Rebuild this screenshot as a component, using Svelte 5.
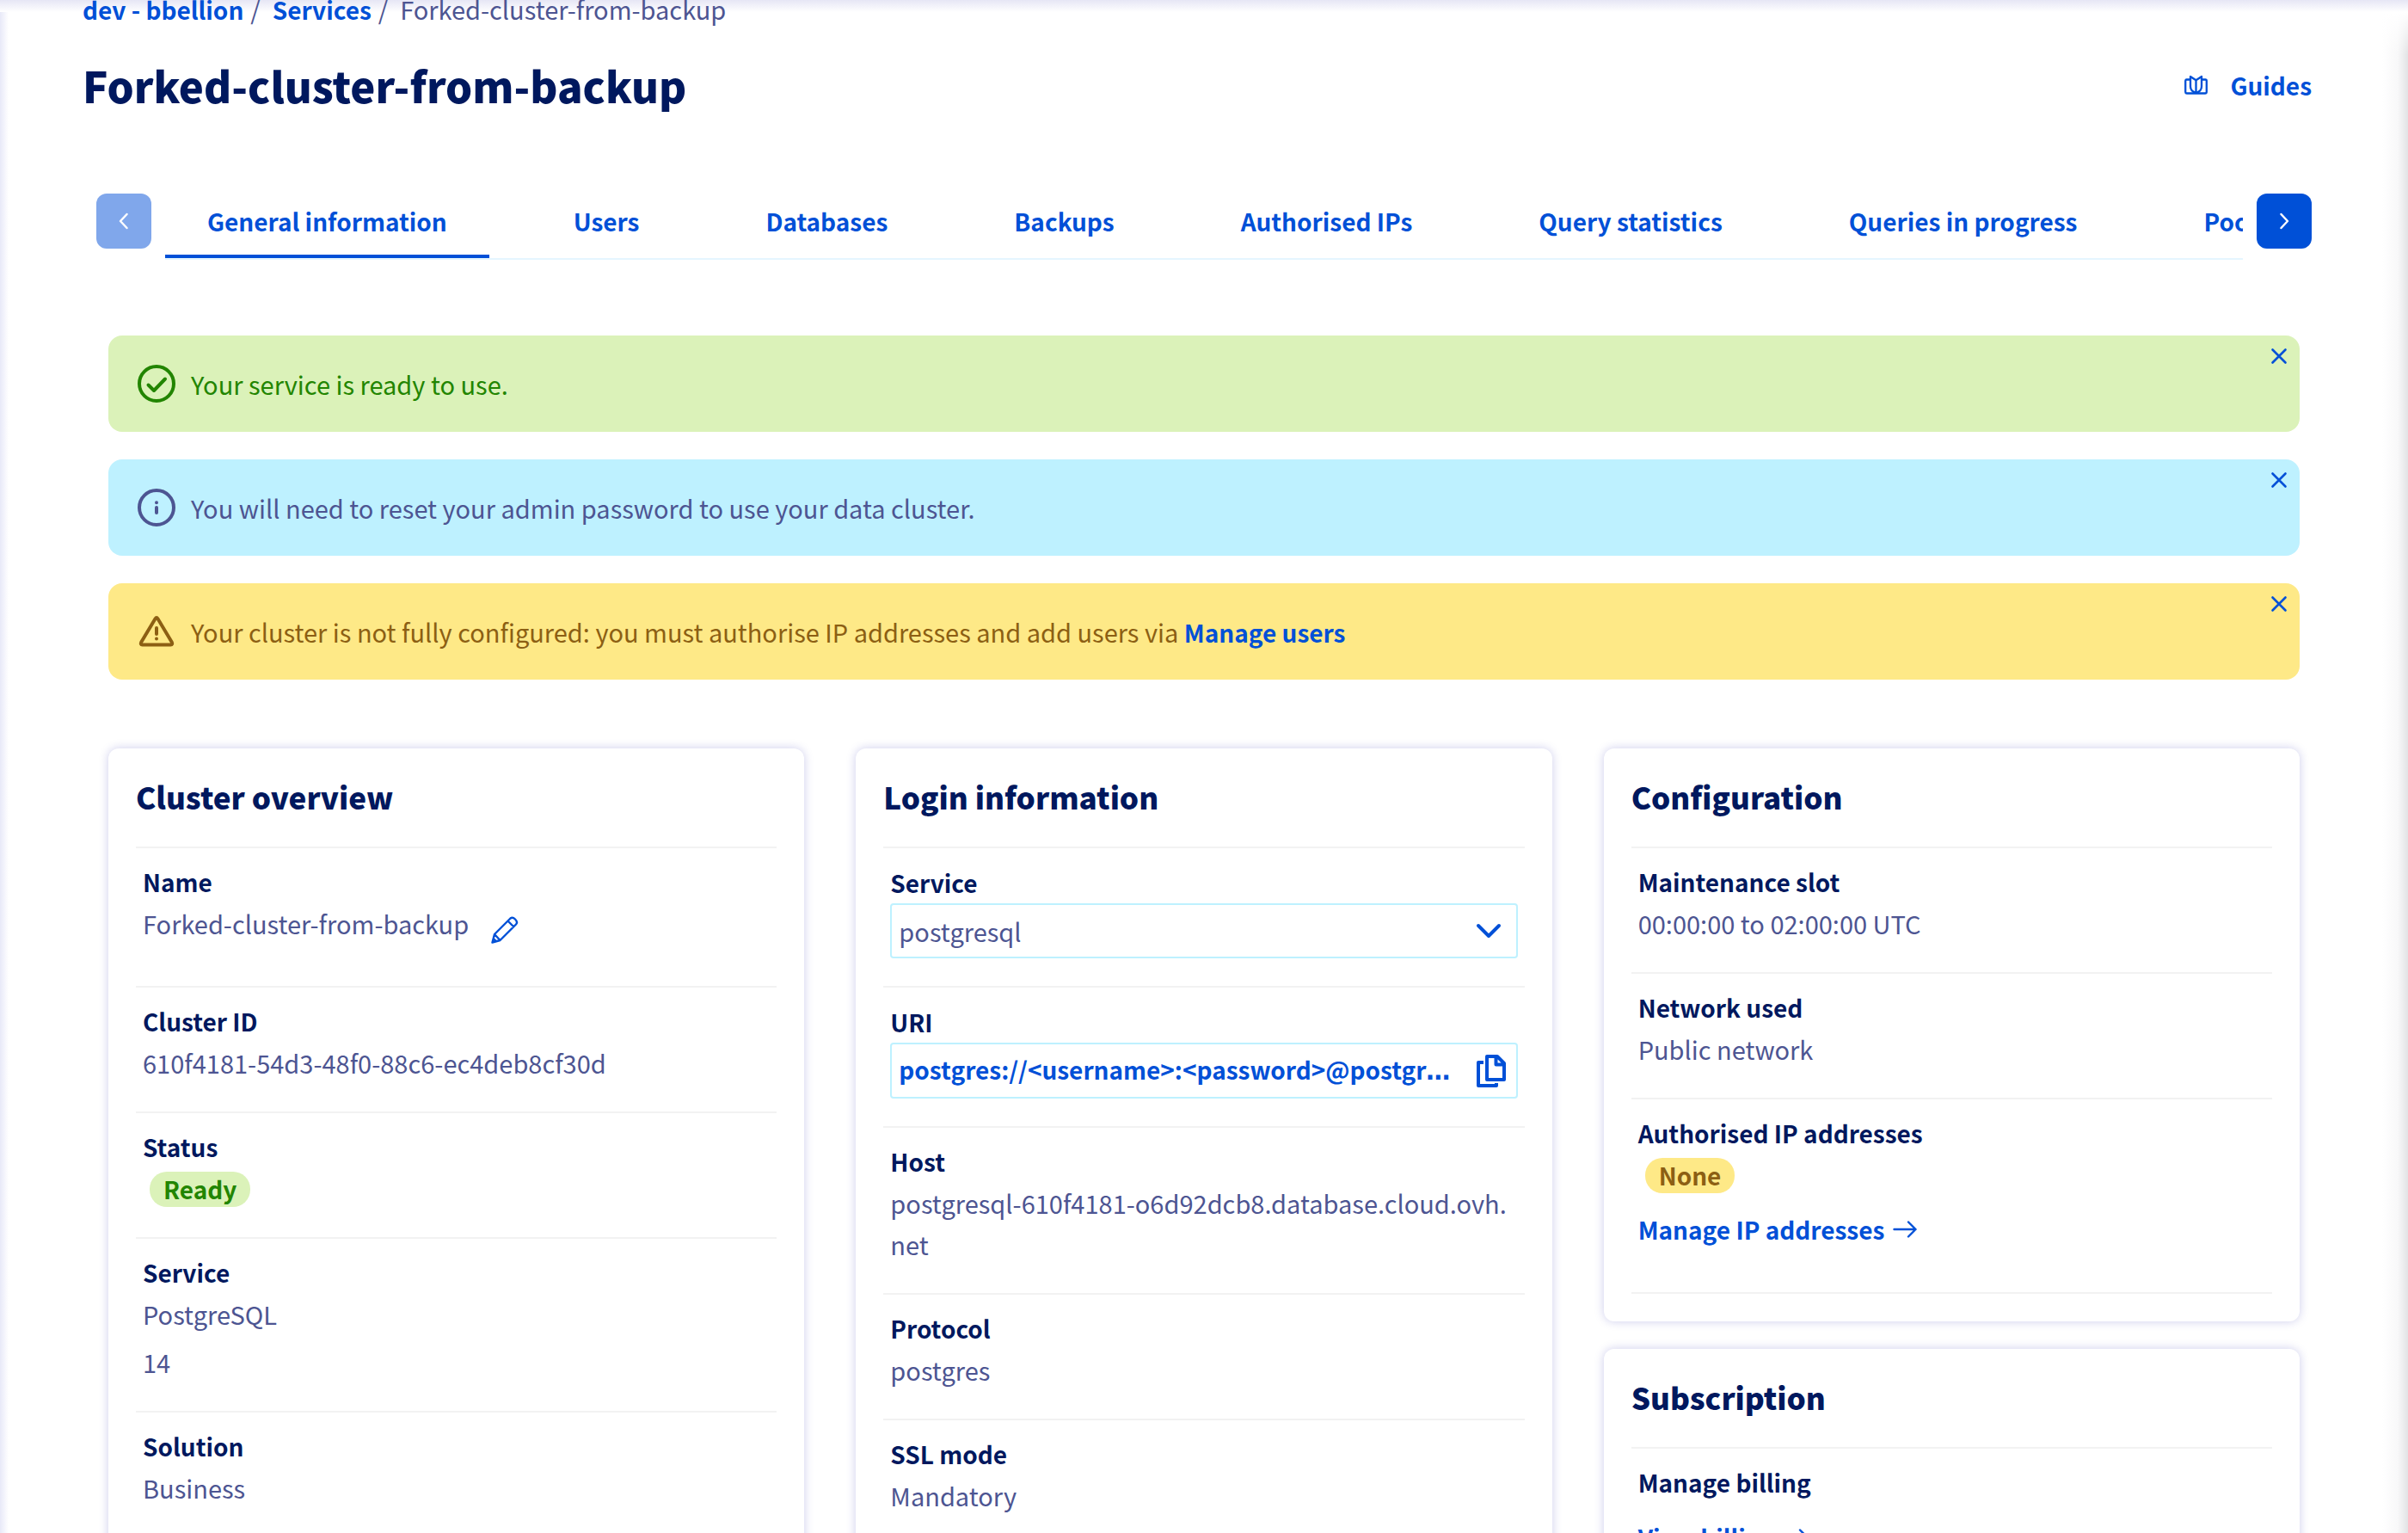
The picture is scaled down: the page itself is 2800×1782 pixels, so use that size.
<script>
  const tabs = [
    'General information',
    'Users',
    'Databases',
    'Backups',
    'Authorised IPs',
    'Query statistics',
    'Queries in progress',
    'Pools',
  ];
  let active = $state('General information');
  let service = $state('postgresql');
</script>

{#snippet close()}
  <button class="close" aria-label="Close">
    <svg width="20" height="20" viewBox="0 0 20 20" fill="none" stroke="currentColor" stroke-width="2.6" stroke-linecap="round">
      <path d="M2.5 2.5 17.5 17.5M17.5 2.5 2.5 17.5" />
    </svg>
  </button>
{/snippet}

{#snippet arrow()}
  <svg class="arrow" width="28" height="22" viewBox="0 0 28 22" fill="none" stroke="currentColor" stroke-width="2.4" stroke-linecap="round" stroke-linejoin="round">
    <path d="M1.5 11H26.5M18 2.5 26.5 11 18 19.5" />
  </svg>
{/snippet}

<div class="page">
  <nav class="breadcrumb" aria-label="Breadcrumb">
    <a href="#project">dev - bbellion</a><span class="sep">/</span>
    <a href="#services">Services</a><span class="sep">/</span>
    <span>Forked-cluster-from-backup</span>
  </nav>

  <header class="title-row">
    <h1>Forked-cluster-from-backup</h1>
    <a class="guides" href="#guides">
      <svg width="27" height="24" viewBox="0 0 27 24" fill="none" stroke="currentColor" stroke-width="2.3" stroke-linejoin="round">
        <path d="M7 5.500H2.600Q1.200 5.500 1.200 7V19.700Q1.200 21.500 3 21.500H24Q25.800 21.500 25.800 19.700V7Q25.800 5.500 24.400 5.500H20" />
        <path d="M13.500 6.200 7 2V13.500Q7 19 13.500 21 20 19 20 13.500V2L13.500 6.200V21" />
      </svg>
      Guides
    </a>
  </header>

  <div class="tab-bar">
    <button class="scroll" disabled aria-label="Previous tabs">
      <svg width="12" height="20" viewBox="0 0 12 20" fill="none" stroke="currentColor" stroke-width="2.4" stroke-linecap="round" stroke-linejoin="round"><path d="M9.500 2 2 10 9.500 18" /></svg>
    </button>
    <div class="tabs" role="tablist">
      {#each tabs as tab}
        <button class="tab" class:active={tab === active} role="tab" aria-selected={tab === active} onclick={() => (active = tab)}>{tab}</button>
      {/each}
    </div>
    <button class="scroll" aria-label="Next tabs">
      <svg width="12" height="20" viewBox="0 0 12 20" fill="none" stroke="currentColor" stroke-width="2.4" stroke-linecap="round" stroke-linejoin="round"><path d="M2.500 2 10 10 2.500 18" /></svg>
    </button>
  </div>

  <main>
    <section class="alerts">
      <div class="alert success">
        <svg width="44" height="44" viewBox="0 0 44 44" fill="none" stroke="currentColor" stroke-width="4" stroke-linecap="round" stroke-linejoin="round">
          <circle cx="22" cy="22" r="20" /><path d="M12.5 23.5 19 30 32 16.5" />
        </svg>
        <p>Your service is ready to use.</p>
        {@render close()}
      </div>
      <div class="alert info">
        <svg width="44" height="44" viewBox="0 0 44 44" fill="none" stroke="currentColor" stroke-width="4" stroke-linecap="round">
          <circle cx="22" cy="22" r="20" /><path d="M22 22V28M22 16.2V16.3" />
        </svg>
        <p>You will need to reset your admin password to use your data cluster.</p>
        {@render close()}
      </div>
      <div class="alert warning">
        <svg width="44" height="44" viewBox="0 0 44 44" fill="none" stroke="currentColor" stroke-width="4" stroke-linecap="round" stroke-linejoin="round">
          <path d="M20.5 7.2Q22 4.800 23.500 7.200L39.800 34.500Q41 37.500 38.500 37.500H5.500Q3 37.500 4.200 34.500Z" /><path d="M22 18V25M22 30.500V30.600" />
        </svg>
        <p>Your cluster is not fully configured: you must authorise IP addresses and add users via <a href="#users">Manage users</a></p>
        {@render close()}
      </div>
    </section>

    <div class="columns">
      <section class="card">
        <h2>Cluster overview</h2>
        <dl>
          <div class="row">
            <dt>Name</dt>
            <dd class="name">
              Forked-cluster-from-backup
              <button class="edit" aria-label="Edit name">
                <svg width="32" height="32" viewBox="0 0 32 32" fill="none" stroke="currentColor" stroke-width="2.4" stroke-linejoin="round">
                  <path d="M1.500 30.500 4 21 22.500 2.500Q25 .5 28 3.500 31.500 7 29 9.500L10.500 28ZM4 21 10.500 28M19.500 5.500 26.500 12.500M1.500 30.500 6 29.300 2.800 26Z" />
                </svg>
              </button>
            </dd>
          </div>
          <div class="row"><dt>Cluster ID</dt><dd>610f4181-54d3-48f0-88c6-ec4deb8cf30d</dd></div>
          <div class="row"><dt>Status</dt><dd><span class="badge success">Ready</span></dd></div>
          <div class="row"><dt>Service</dt><dd>PostgreSQL</dd><dd class="version">14</dd></div>
          <div class="row"><dt>Solution</dt><dd>Business</dd></div>
        </dl>
      </section>

      <section class="card">
        <h2>Login information</h2>
        <div class="row field">
          <label for="service">Service</label>
          <div class="select">
            <select id="service" bind:value={service}><option>postgresql</option></select>
            <svg width="30" height="18" viewBox="0 0 30 18" fill="none" stroke="currentColor" stroke-width="4" stroke-linecap="round" stroke-linejoin="round"><path d="M3 3 15 15 27 3" /></svg>
          </div>
        </div>
        <div class="row field">
          <div class="label">URI</div>
          <div class="uri">
            <a href="#uri"><span>postgres://&lt;username&gt;:&lt;password&gt;@postgresql-610f4181</span></a>
            <button aria-label="Copy URI">
              <svg width="34" height="38" viewBox="0 0 34 38" fill="none" stroke="currentColor" stroke-width="4" stroke-linejoin="round">
                <path d="M12 2H24L32 10V29H12ZM22.500 2V11.500H32" /><path d="M8 9H2V36H23V33" />
              </svg>
            </button>
          </div>
        </div>
        <dl>
          <div class="row"><dt>Host</dt><dd class="host">postgresql-610f4181-o6d92dcb8.database.cloud.ovh.net</dd></div>
          <div class="row"><dt>Protocol</dt><dd>postgres</dd></div>
          <div class="row"><dt>SSL mode</dt><dd>Mandatory</dd></div>
        </dl>
      </section>

      <div class="stack">
        <section class="card">
          <h2>Configuration</h2>
          <dl>
            <div class="row"><dt>Maintenance slot</dt><dd>00:00:00 to 02:00:00 UTC</dd></div>
            <div class="row"><dt>Network used</dt><dd>Public network</dd></div>
            <div class="row">
              <dt>Authorised IP addresses</dt>
              <dd><span class="badge warning">None</span></dd>
              <dd class="action"><a href="#ips">Manage IP addresses {@render arrow()}</a></dd>
            </div>
          </dl>
        </section>
        <section class="card">
          <h2>Subscription</h2>
          <dl>
            <div class="row">
              <dt>Manage billing</dt>
              <dd class="action"><a href="#billing">View billing {@render arrow()}</a></dd>
            </div>
          </dl>
        </section>
      </div>
    </div>
  </main>
</div>

<style>
  :global(body) {
    margin: 0;
  }

  .page {
    --blue: #0050d7;
    --navy: #00185e;
    --text: #4d5592;
    --sans: 'Noto Sans CJK SC', 'Open Sans', sans-serif;
    box-sizing: border-box;
    height: 100vh;
    overflow: hidden;
    padding: 0 112px 0 96px;
    background:
      linear-gradient(to bottom, #e6e6f5, #ffffff) top / 100% 14px no-repeat,
      linear-gradient(to right, #e8e9f8, #ffffff) 0 14px / 10px 100% no-repeat,
      linear-gradient(to bottom, #ffffff, #ffffff00) 100% 14px / 32px 50px no-repeat,
      linear-gradient(to left, #e2e3e5, #f8f8f9 40%, #ffffff) 100% 14px / 30px 100% no-repeat,
      #ffffff;
    color: var(--text);
    font: 400 29px/48px var(--sans);
  }

  * {
    box-sizing: border-box;
  }

  h1, h2, p, dl, dd {
    margin: 0;
  }

  svg {
    display: block;
    flex: none;
  }

  a, .tab, dt, label, .label, .badge {
    font-size: 28px;
    font-weight: 600;
  }

  a {
    color: var(--blue);
    text-decoration: none;
  }

  button, select {
    padding: 0;
    border: 0;
    background: none;
    color: var(--blue);
    font: inherit;
    cursor: pointer;
  }

  .breadcrumb {
    display: flex;
    align-items: baseline;
    height: 20px;
    line-height: 20px;
  }

  .sep {
    margin: 0 14px 0 8px;
  }

  .title-row {
    display: flex;
    align-items: center;
    justify-content: space-between;
    margin-top: 42px;
  }

  h1 {
    color: var(--navy);
    font-size: 49px;
    font-weight: 900;
    line-height: 74px;
  }

  .guides {
    display: flex;
    align-items: center;
    gap: 26px;
  }

  .tab-bar {
    display: flex;
    gap: 16px;
    margin: 89px 0 0 16px;
  }

  .scroll {
    display: grid;
    flex: none;
    place-items: center;
    width: 64px;
    height: 64px;
    border-radius: 12px;
    background: var(--blue);
    color: #ffffff;
  }

  .scroll:disabled {
    background: #80a7eb;
  }

  .tabs {
    display: flex;
    flex: 1;
    gap: 49px;
    min-width: 0;
    overflow: hidden;
    border-bottom: 2px solid #e5f6ff;
  }

  .tab {
    flex: none;
    height: 75px;
    padding: 0 49px 8px;
    border-bottom: 4px solid transparent;
    color: var(--blue);
    font-size: 28px;
    font-weight: 600;
  }

  .tab.active {
    border-color: var(--blue);
  }

  main {
    padding: 88px 14px 0 30px;
  }

  .alerts {
    display: grid;
    gap: 32px;
  }

  .alert {
    position: relative;
    display: flex;
    align-items: center;
    gap: 18px;
    min-height: 112px;
    padding: 32px 34px;
    border-radius: 16px;
  }

  .alert a {
    line-height: 40px;
  }

  .success {
    background: #dbf2b9;
    color: #228500;
  }

  .info {
    background: #bef1ff;
  }

  .warning {
    background: #fee987;
    color: #8c5f13;
  }

  .close {
    position: absolute;
    top: 14px;
    right: 14px;
  }

  .columns {
    display: grid;
    grid-template-columns: repeat(3, minmax(0, 1fr));
    gap: 60px;
    margin-top: 80px;
  }

  .stack {
    display: grid;
    gap: 32px;
    align-content: start;
  }

  .card {
    padding: 32px;
    border-radius: 12px;
    background: #ffffff;
    box-shadow: 0 0 12px rgba(0, 0, 160, 0.2);
  }

  h2 {
    padding-bottom: 34px;
    border-bottom: 2px solid #f2f2f2;
    color: var(--navy);
    font-size: 35px;
    font-weight: 900;
    line-height: 48px;
  }

  .row {
    padding: 15px 8px 33px;
    border-bottom: 2px solid #f2f2f2;
  }

  .field {
    padding: 16px 8px 32px;
  }

  dt, label, .label {
    display: block;
    color: var(--navy);
  }

  .name {
    display: flex;
    gap: 26px;
    min-height: 64px;
  }

  .edit {
    align-self: flex-start;
    padding-top: 16px;
  }

  .version {
    margin-top: 8px;
  }

  .badge {
    display: inline-block;
    margin-left: 8px;
    padding: 0 16px;
    border-radius: 20px;
    line-height: 41px;
  }

  .select, .uri {
    display: flex;
    align-items: center;
    height: 64px;
    border: 2px solid #bef1ff;
    border-radius: 4px;
  }

  .select {
    position: relative;
    color: var(--blue);
  }

  .select select {
    width: 100%;
    height: 100%;
    padding: 0 60px 0 8px;
    appearance: none;
    color: var(--text);
  }

  .select svg {
    position: absolute;
    right: 17px;
    pointer-events: none;
  }

  .uri {
    gap: 16px;
    height: 65px;
    padding: 0 12px 0 8px;
  }

  /* The link's own family draws the ellipsis on the baseline. */
  .uri a {
    flex: 1;
    min-width: 0;
    overflow: hidden;
    font-family: 'DejaVu Sans', sans-serif;
    text-overflow: ellipsis;
    white-space: nowrap;
  }

  .uri span {
    font-family: var(--sans);
  }

  .host {
    word-break: break-all;
  }

  .action {
    margin: 16px 0;
  }

  .action a {
    display: flex;
    align-items: center;
    gap: 10px;
  }
</style>
